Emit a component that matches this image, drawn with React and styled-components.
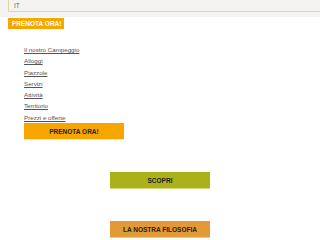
import React from "react";
import styled, { createGlobalStyle } from "styled-components";

const Global = createGlobalStyle`
  html, body { margin: 0; padding: 0; background: #fff; }
  body { font-family: "Liberation Sans", Arial, sans-serif; }
`;

const TopBar = styled.div`
  background: #f4f3f1;
  height: 17px;
  padding-left: 8px;
  overflow: hidden;
`;

const LangSelect = styled.div`
  margin-top: -2px;
  height: 12px;
  border: 1px solid #d5dc9b;
  border-right: none;
  background: #f4f3f1;
  font-size: 6.5px;
  color: #666;
  padding-left: 5px;
  display: flex;
  align-items: center;
`;

const TopButton = styled.div`
  width: fit-content;
  margin: 1px 0 0 8px;
  background: #f7a600;
  color: #fff;
  font-weight: bold;
  font-size: 6.5px;
  line-height: 11px;
  padding: 0 3px 0 4px;
`;

const Nav = styled.nav`
  padding: 15px 0 0 24px;
  display: flex;
  flex-direction: column;
  align-items: flex-start;
`;

const NavLink = styled.a`
  font-size: 6.2px;
  line-height: 11.3px;
  color: #555;
  text-decoration: underline;
  &:visited { color: #555; }
`;

const Block = styled.div`
  display: flex;
  justify-content: ${(p) => (p.$center ? "center" : "flex-start")};
  padding-left: ${(p) => (p.$center ? "0" : "24px")};
  margin-top: ${(p) => p.$mt}px;
`;

const Btn = styled.div`
  width: 100px;
  height: 16px;
  background: ${(p) => p.$bg};
  border-bottom: 1px solid ${(p) => p.$line};
  color: #222;
  font-weight: bold;
  font-size: 6.5px;
  display: flex;
  align-items: center;
  justify-content: center;
`;

const links = [
  "Il nostro Campeggio",
  "Alloggi",
  "Piazzole",
  "Servizi",
  "Attività",
  "Territorio",
  "Prezzi e offerte",
];

export default function App() {
  return (
    <>
      <Global />
      <TopBar>
        <LangSelect>IT</LangSelect>
      </TopBar>
      <TopButton>PRENOTA ORA!</TopButton>
      <Nav>
        {links.map((l) => (
          <NavLink key={l} href="#">{l}</NavLink>
        ))}
      </Nav>
      <Block $mt={0}>
        <Btn $bg="#f7a600" $line="#fbe6b8">PRENOTA ORA!</Btn>
      </Block>
      <Block $center $mt={32}>
        <Btn $bg="#aab11b" $line="#d9dc7a">SCOPRI</Btn>
      </Block>
      <Block $center $mt={32}>
        <Btn $bg="#e19a36" $line="#f0c98f">LA NOSTRA FILOSOFIA</Btn>
      </Block>
    </>
  );
}
